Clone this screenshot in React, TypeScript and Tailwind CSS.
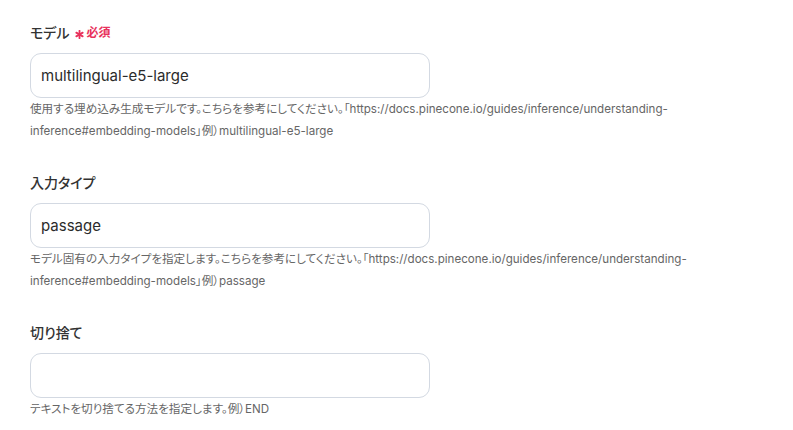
import React from 'react';

type Field = {
  label: string;
  required?: boolean;
  value: string;
  help: string;
};

const FIELDS: Field[] = [
  {
    label: 'モデル',
    required: true,
    value: 'multilingual-e5-large',
    help: '使用する埋め込み生成モデルです。こちらを参考にしてください。「https://docs.pinecone.io/guides/inference/understanding-inference#embedding-models」例）multilingual-e5-large',
  },
  {
    label: '入力タイプ',
    value: 'passage',
    help: 'モデル固有の入力タイプを指定します。こちらを参考にしてください。「https://docs.pinecone.io/guides/inference/understanding-inference#embedding-models」例）passage',
  },
  {
    label: '切り捨て',
    value: '',
    help: 'テキストを切り捨てる方法を指定します。例）END',
  },
];

const Asterisk = () => (
  <svg width="9" height="9" viewBox="0 0 12 12" className="mt-[2px]">
    <g stroke="#e8315b" strokeWidth="2.4" strokeLinecap="round">
      <line x1="6" y1="1" x2="6" y2="11" />
      <line x1="1.7" y1="3.5" x2="10.3" y2="8.5" />
      <line x1="1.7" y1="8.5" x2="10.3" y2="3.5" />
    </g>
  </svg>
);

const App: React.FC = () => {
  return (
    <div className="min-h-[430px] bg-white px-[30px] pt-[23px] font-['Inter','Noto_Sans_CJK_JP',sans-serif] text-[#333] [font-feature-settings:'palt']">
      <div className="flex w-[700px] flex-col gap-[31px]">
        {FIELDS.map((field) => (
          <div key={field.label}>
            {/* Label */}
            <div className="flex h-5 items-center gap-[5px] text-[14px] font-medium leading-5">
              <span>{field.label}</span>
              {field.required && (
                <span className="flex items-center gap-[3px] text-[#e8315b]">
                  <Asterisk />
                  <span className="text-[12px] font-semibold">必須</span>
                </span>
              )}
            </div>

            {/* Input */}
            <input
              type="text"
              defaultValue={field.value}
              className="mt-[10px] block h-[45px] w-[400px] rounded-[11px] border border-[#d3d9e2] bg-white px-[10px] text-[15px] text-[#2b2b2b] outline-none"
            />

            {/* Help */}
            <p className="mt-0 text-[11.6px] leading-[22px] text-[#666]">{field.help}</p>
          </div>
        ))}
      </div>
    </div>
  );
};

export default App;
